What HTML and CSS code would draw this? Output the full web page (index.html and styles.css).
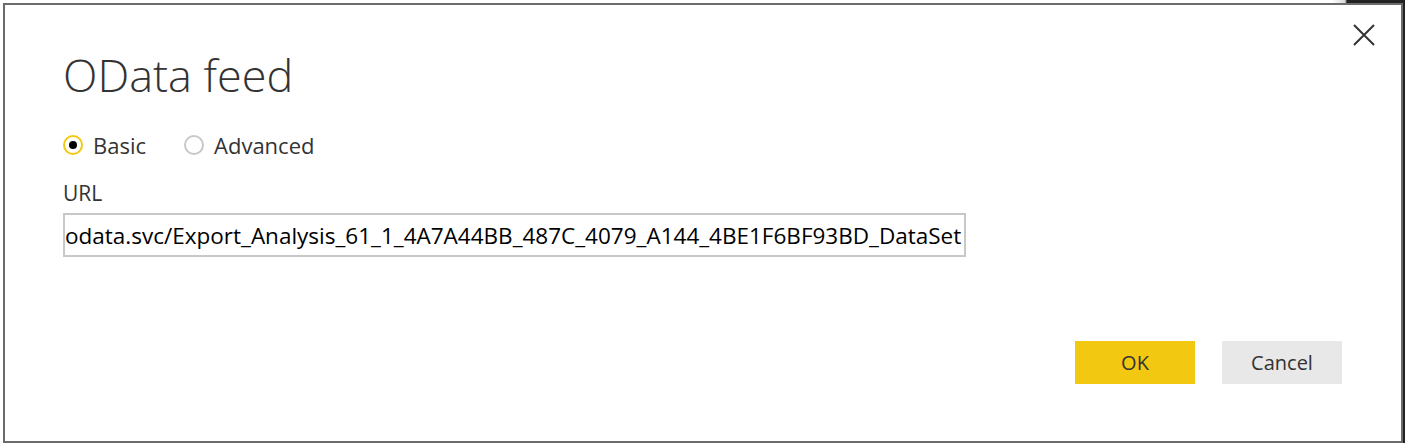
FILE: index.html
```html
<!DOCTYPE html>
<html>
<head>
<meta charset="utf-8">
<link rel="stylesheet" href="styles.css">
</head>
<body>
<div class="dialog">
  <button class="close" aria-label="Close">
    <svg width="22" height="22" viewBox="0 0 22 22"><path d="M1 1 L21 21 M21 1 L1 21" stroke="#333" stroke-width="2" fill="none"/></svg>
  </button>
  <h1 class="title">OData feed</h1>
  <div class="radios">
    <label class="radio"><span class="dot checked"></span><span>Basic</span></label>
    <label class="radio"><span class="dot"></span><span>Advanced</span></label>
  </div>
  <div class="field-label">URL</div>
  <div class="input"><span class="input-text">odata.svc/Export_Analysis_61_1_4A7A44BB_487C_4079_A144_4BE1F6BF93BD_DataSet</span></div>
  <div class="actions">
    <button class="btn primary">OK</button>
    <button class="btn">Cancel</button>
  </div>
</div>
</body>
</html>
```
FILE: styles.css
```css
html, body {
  margin: 0;
  padding: 0;
}
body {
  width: 1405px;
  height: 443px;
  overflow: hidden;
  background: linear-gradient(to right, #ffffff 1332px, #d8d8d8 1345px, #222222 1347px);
  padding: 3px 0 0 3px;
  box-sizing: border-box;
  font-family: "Open Sans", "Noto Sans", sans-serif;
  color: #333333;
}
.dialog {
  position: relative;
  box-sizing: border-box;
  width: 1400px;
  height: 440px;
  background: #ffffff;
  border: 2px solid #6b6b6b;
  padding: 0 59px 0 58px;
  display: flex;
  flex-direction: column;
}
.close {
  position: absolute;
  top: 14px;
  right: 21px;
  width: 32px;
  height: 32px;
  padding: 5px;
  border: 0;
  background: transparent;
}
.title {
  margin: 40px 0 0 0;
  font-size: 45px;
  font-weight: 300;
  line-height: 60px;
  color: #333333;
}
.radios {
  display: flex;
  gap: 38px;
  margin-top: 25px;
  font-size: 22px;
  line-height: 30px;
}
.radio {
  display: flex;
  align-items: center;
  gap: 10px;
}
.dot {
  width: 20px;
  height: 20px;
  box-sizing: border-box;
  border: 2.5px solid #c8c8c8;
  border-radius: 50%;
  position: relative;
  margin-left: 0;
}
.dot.checked {
  border-color: #f2c811;
}
.dot.checked::after {
  content: "";
  position: absolute;
  left: 50%;
  top: 50%;
  width: 8px;
  height: 8px;
  margin: -4px 0 0 -4px;
  border-radius: 50%;
  background: #000000;
}
.field-label {
  margin-top: 18px;
  font-size: 21px;
  line-height: 30px;
}
.input {
  margin-top: 5px;
  width: 903px;
  height: 44px;
  box-sizing: border-box;
  border: 2px solid #c8c8c8;
  display: flex;
  align-items: center;
  overflow: hidden;
  white-space: nowrap;
}
.input-text {
  font-size: 22.5px;
  color: #000000;
  margin-left: 0;
}
.actions {
  margin-top: 84px;
  display: flex;
  justify-content: flex-end;
  gap: 27px;
}
.btn {
  width: 120px;
  height: 43px;
  border: 0;
  background: #e8e8e8;
  font-family: inherit;
  font-size: 20px;
  color: #333333;
}
.btn.primary {
  background: #f2c811;
}
```
